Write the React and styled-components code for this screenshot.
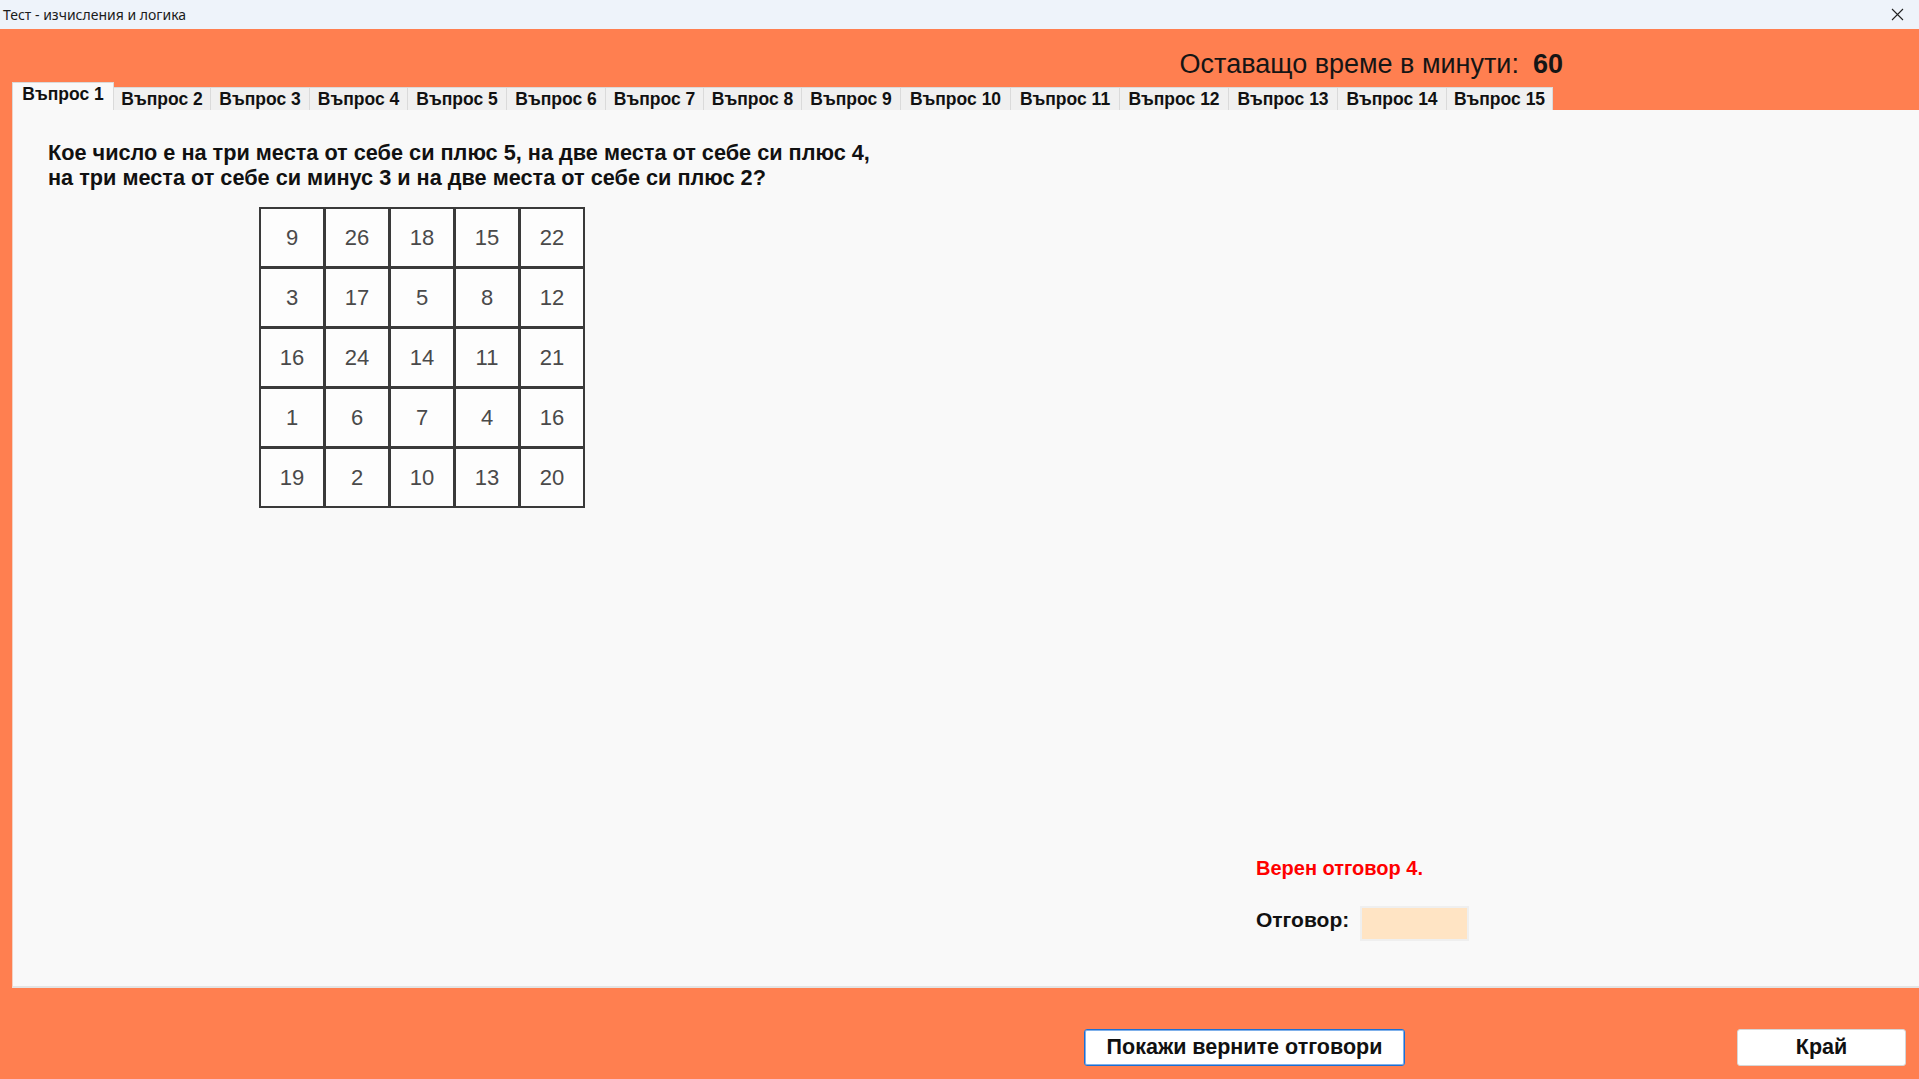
import React from 'react';
import styled, { createGlobalStyle } from 'styled-components';

const GlobalStyle = createGlobalStyle`
  html, body {
    margin: 0;
    padding: 0;
  }
  body {
    font-family: "Liberation Sans", Arial, sans-serif;
    background: #ff7f50;
    overflow: hidden;
  }
`;

const Window = styled.div`
  width: 1919px;
  height: 1079px;
  display: flex;
  flex-direction: column;
  background: #ff7f50;
`;

const TitleBar = styled.div`
  flex: 0 0 29px;
  display: flex;
  align-items: center;
  justify-content: space-between;
  padding: 0 15px 0 3px;
  background: #eef3fa;
  font-family: "Noto Sans", sans-serif;
  font-size: 14px;
  color: #1b1b1b;
`;

const CloseIcon = styled.svg`
  width: 13px;
  height: 13px;
`;

const Header = styled.div`
  flex: 0 0 81px;
  display: flex;
  flex-direction: column;
`;

const TimerRow = styled.div`
  flex: 1;
  display: flex;
  align-items: center;
  justify-content: flex-end;
  padding: 18px 356px 0 0;
  font-size: 27px;
  color: #151515;
`;

const TimerValue = styled.b`
  margin-left: 14px;
  font-weight: 700;
`;

const TabStrip = styled.div`
  flex: 0 0 28px;
  display: flex;
  align-items: flex-end;
  padding-left: 12px;
`;

const Tab = styled.div`
  height: ${p => (p.active ? 28 : 23)}px;
  box-sizing: border-box;
  display: flex;
  align-items: center;
  justify-content: center;
  padding: ${p => (p.active ? '0 0 4px' : '1px 0 0')};
  width: ${p => p.w}px;
  background: ${p => (p.active ? '#f9f9f9' : '#f0f0f0')};
  border: 1px solid #dadada;
  border-bottom: none;
  border-left-width: ${p => (p.first ? 1 : 0)}px;
  font-size: 17.5px;
  font-weight: 700;
  color: #111;
  white-space: nowrap;
`;

const Panel = styled.div`
  flex: 1;
  margin-left: 12px;
  display: flex;
  flex-direction: column;
  padding: 31px 0 45px 35px;
  background: #f9f9f9;
  border-left: 1px solid #f3d2c4;
  border-bottom: 2px solid #e4e4e4;
`;

const Question = styled.div`
  font-size: 21.7px;
  font-weight: 700;
  line-height: 24.5px;
  color: #111;
`;

const NumberGrid = styled.div`
  margin: 17px 0 0 211px;
  display: grid;
  grid-template-columns: repeat(5, 62px);
  grid-auto-rows: 57px;
  gap: 3px;
  padding: 2px;
  width: max-content;
  background: #3a3a3a;
`;

const Cell = styled.div`
  display: flex;
  align-items: center;
  justify-content: center;
  background: #fdfdfd;
  font-size: 22px;
  color: #4a4a4a;
`;

const AnswerBlock = styled.div`
  margin: auto 0 0 1208px;
  display: flex;
  flex-direction: column;
  gap: 20px;
`;

const Correct = styled.div`
  font-size: 20px;
  font-weight: 700;
  color: #ff0000;
`;

const AnswerRow = styled.div`
  display: flex;
  align-items: flex-start;
  gap: 11px;
  font-size: 21px;
  font-weight: 700;
  color: #111;
`;

const AnswerLabel = styled.span`
  padding-top: 8px;
`;

const AnswerInput = styled.div`
  width: 105px;
  height: 31px;
  margin-top: 6px;
  background: #ffe4c4;
  border: 2px solid #efefef;
`;

const Footer = styled.div`
  flex: 0 0 91px;
  display: flex;
  justify-content: flex-end;
  align-items: flex-start;
  gap: 332px;
  padding: 41px 13px 0 0;
  box-sizing: border-box;
`;

const Button = styled.button`
  width: ${p => p.w}px;
  height: 37px;
  background: #fff;
  border: ${p => (p.primary ? '1px solid #1a6fd4' : '1px solid #d6d6d6')};
  box-shadow: ${p => (p.primary ? 'inset 0 0 0 1px #7fb0ea' : 'none')};
  border-radius: 3px;
  font-family: "Liberation Sans", Arial, sans-serif;
  font-size: 21.5px;
  font-weight: 700;
  color: #111;
  cursor: pointer;
`;

const grid = [
  [9, 26, 18, 15, 22],
  [3, 17, 5, 8, 12],
  [16, 24, 14, 11, 21],
  [1, 6, 7, 4, 16],
  [19, 2, 10, 13, 20],
];

const tabWidths = [102, 97, 99, 98, 99, 99, 98, 98, 99, 110, 109, 109, 109, 109, 106];

export default function App() {
  return (
    <>
      <GlobalStyle />
      <Window>
        <TitleBar>
          <span>Тест - изчисления и логика</span>
          <CloseIcon viewBox="0 0 13 13">
            <path d="M1 1 L12 12 M12 1 L1 12" stroke="#222" strokeWidth="1.1" fill="none" />
          </CloseIcon>
        </TitleBar>
        <Header>
          <TimerRow>
            Оставащо време в минути:<TimerValue>60</TimerValue>
          </TimerRow>
          <TabStrip>
            {tabWidths.map((w, i) => (
              <Tab key={i} w={w} active={i === 0} first={i === 0}>
                Въпрос {i + 1}
              </Tab>
            ))}
          </TabStrip>
        </Header>
        <Panel>
          <Question>
            Кое число е на три места от себе си плюс 5, на две места от себе си плюс 4,
            <br />
            на три места от себе си минус 3 и на две места от себе си плюс 2?
          </Question>
          <NumberGrid>
            {grid.flat().map((n, i) => (
              <Cell key={i}>{n}</Cell>
            ))}
          </NumberGrid>
          <AnswerBlock>
            <Correct>Верен отговор 4.</Correct>
            <AnswerRow>
              <AnswerLabel>Отговор:</AnswerLabel>
              <AnswerInput />
            </AnswerRow>
          </AnswerBlock>
        </Panel>
        <Footer>
          <Button w={321} primary>Покажи верните отговори</Button>
          <Button w={169}>Край</Button>
        </Footer>
      </Window>
    </>
  );
}
